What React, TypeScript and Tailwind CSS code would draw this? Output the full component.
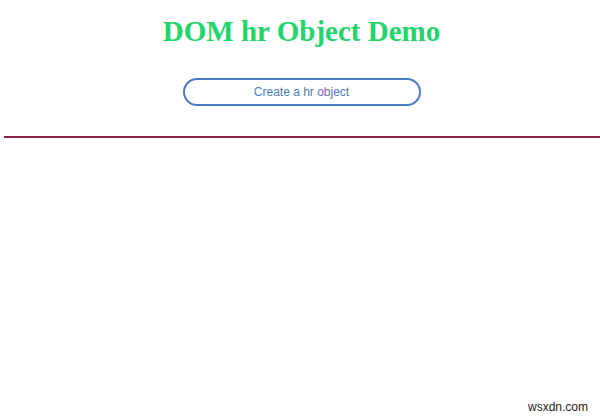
export default function App() {
  return (
    <div className="relative w-[600px] h-[419px] bg-white overflow-hidden">
      <div className="flex flex-col items-center pt-[14px] pl-[3px]">
        <h1
          className="text-[29px] leading-[34px] font-bold text-[#22d46c]"
          style={{ fontFamily: '"Liberation Serif", "Times New Roman", serif' }}
        >
          DOM hr Object Demo
        </h1>
        <button
          className="mt-[30px] w-[238px] h-[28px] rounded-full border-2 border-[#4b7cc0] text-[#4b7cc0] text-[12px] bg-white"
          style={{ fontFamily: '"Liberation Sans", Arial, sans-serif' }}
        >
          Create a hr object
        </button>
      </div>
      <div className="ml-[4px] mt-[30px] h-[2px] bg-[#8a2040]" />
      <div
        className="absolute right-[12px] bottom-[3px] text-[12px] text-[#222]"
        style={{ fontFamily: '"Liberation Sans", Arial, sans-serif' }}
      >
        wsxdn.com
      </div>
    </div>
  );
}
